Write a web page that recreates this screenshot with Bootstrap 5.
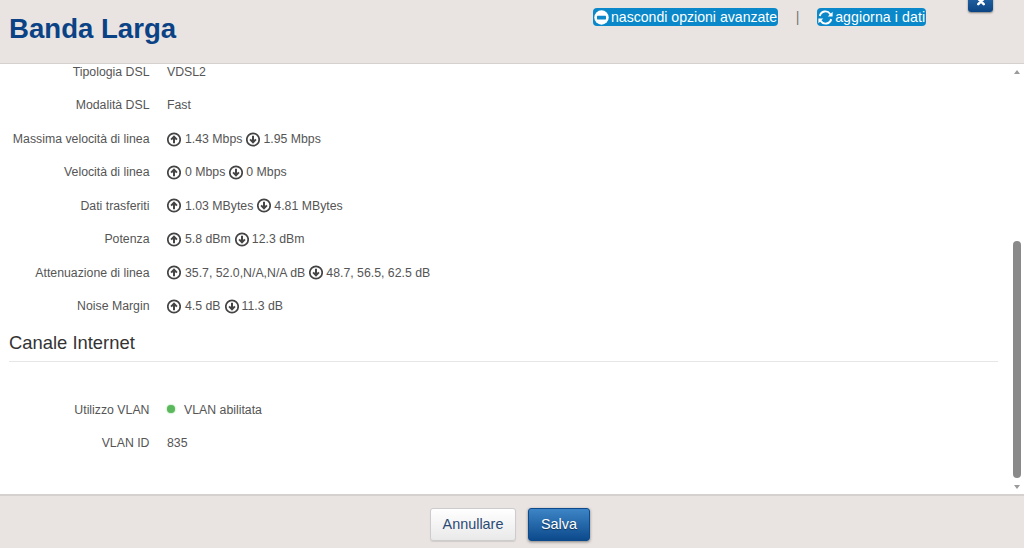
<!DOCTYPE html>
<html lang="it">
<head>
<meta charset="utf-8">
<title>Banda Larga</title>
<link href="https://cdn.jsdelivr.net/npm/bootstrap@5.3.0/dist/css/bootstrap.min.css" rel="stylesheet">
<style>
html,body{height:548px;overflow:hidden}
body{font-family:"Liberation Sans",Arial,sans-serif;font-size:12.3px;color:#555;background:#fff}
.shell{height:548px}
.top-bar{height:64px;background:#e9e4e1;border-bottom:1px solid #d5d1ce;flex:none;position:relative}
.page-title{font-size:27.6px;font-weight:700;color:#0a4285;margin:13px 0 0 9px;line-height:31px}
.top-links{position:absolute;left:593px;top:8px;font-size:14.1px;line-height:18px}
.pill-link{background:#0a88c9;color:#fff;border-radius:4px;padding:0 1px;height:18px;text-decoration:none}
.pill-link svg{margin-right:2px}
.pill-wide{letter-spacing:.1px}
.pipe{color:#777;width:39px;text-align:center}
.close-tab{position:absolute;left:968px;top:-10px;width:25px;height:22px;background:linear-gradient(#2d72b4,#0c4483);border-radius:0 0 3px 3px;box-shadow:0 1px 2px rgba(0,0,0,.45)}
.close-glyph{margin-bottom:6px}
.scroll-zone{flex:1;min-height:0;position:relative;overflow:hidden}
.data-pane{padding:0 26px 0 9px}
.data-row{height:33.45px;align-items:center}
.data-label{width:140.5px;text-align:right;flex:none;color:#555}
.data-value{margin-left:17.5px;white-space:nowrap;display:flex;align-items:center;color:#555}
.data-value svg{flex:none;margin-right:4px}
.data-value .dn{margin-left:4px;margin-right:3px}
.first-row{margin-top:-8.6px}
.section-head{font-size:18.4px;line-height:22px;color:#333;font-weight:400;margin:9.2px 0 0;padding-bottom:7px;border-bottom:1px solid #e6e6e6}
.gap-block{height:31.4px}
.vlan-dot{width:8px;height:8px;border-radius:50%;background:#5cb85c;box-shadow:0 0 2px #7fcf7f;margin-right:9px;flex:none;margin-bottom:2px}
.track{position:absolute;right:0;top:0;bottom:0;width:17px;background:#fff}
.thumb{position:absolute;left:6px;right:3px;top:177px;height:237px;background:#8a8a8a;border-radius:5px}
.arrow-up,.arrow-dn{position:absolute;left:7px;width:0;height:0;border-left:3px solid transparent;border-right:3px solid transparent}
.arrow-up{top:6px;border-bottom:4px solid #9a9a9a}
.arrow-dn{bottom:5px;border-top:4px solid #9a9a9a}
.foot-bar{height:54px;background:#e9e4e1;border-top:2px solid #d5d1ce;flex:none;padding-top:12px;padding-right:4px}
.act-btn{height:33px;border-radius:3px;font-size:14.4px;line-height:31px;padding:0;text-align:center}
.btn-cancel{width:86px;background:linear-gradient(#fff,#e9e9e9);border:1px solid #ccc;color:#2a4a75;box-shadow:0 1px 1px rgba(0,0,0,.1)}
.btn-save{width:62px;margin-left:12px;background:linear-gradient(#3d85c6,#0c4a8c);border:1px solid #0c4a8c;color:#fff;text-shadow:0 1px 1px rgba(0,0,0,.5);box-shadow:0 1px 3px rgba(0,0,0,.45)}
</style>
</head>
<body>
<div class="shell d-flex flex-column">
  <header class="top-bar">
    <h1 class="page-title">Banda Larga</h1>
    <div class="top-links d-flex align-items-center">
      <a class="pill-link d-flex align-items-center" href="#"><svg width="15" height="15" viewBox="0 0 16 16"><circle cx="8" cy="8" r="7.7" fill="#fff"/><rect x="3.2" y="6" width="9.6" height="4" rx=".6" fill="#0a88c9"/></svg>nascondi opzioni avanzate</a>
      <span class="pipe">|</span>
      <a class="pill-link pill-wide d-flex align-items-center" href="#"><svg width="15" height="15" viewBox="0 0 16 16"><path d="M15 7h-4.6l1.9-1.9A5 5 0 0 0 3 6.6L.9 6A7.2 7.2 0 0 1 13.8 3.6L15.6 1.8V7zM1 9h4.6l-1.9 1.9A5 5 0 0 0 13 9.4l2.1.6A7.2 7.2 0 0 1 2.2 12.4L.4 14.2V9z" fill="#fff"/></svg>aggiorna i dati</a>
    </div>
    <div class="close-tab d-flex align-items-end justify-content-center"><svg class="close-glyph" width="10" height="9" viewBox="0 0 10 10"><path d="M2 2l6 6M8 2l-6 6" stroke="#fff" stroke-width="2.8" stroke-linecap="round"/></svg></div>
  </header>
  <main class="scroll-zone">
    <svg width="0" height="0" class="position-absolute"><defs>
      <g id="up-ic"><circle cx="7" cy="7.5" r="6.2" fill="none" stroke="#444" stroke-width="1.7"/><path d="M7 11.2V4.8M4.1 7.6l2.9-3 2.9 3" fill="none" stroke="#444" stroke-width="2"/></g>
      <g id="dn-ic"><circle cx="7" cy="7.5" r="6.2" fill="none" stroke="#444" stroke-width="1.7"/><path d="M7 3.8v6.4M4.1 7.4l2.9 3 2.9-3" fill="none" stroke="#444" stroke-width="2"/></g>
    </defs></svg>
    <div class="data-pane">
      <div class="d-flex data-row first-row"><div class="data-label">Tipologia DSL</div><div class="data-value">VDSL2</div></div>
      <div class="d-flex data-row"><div class="data-label">Modalità DSL</div><div class="data-value">Fast</div></div>
      <div class="d-flex data-row"><div class="data-label">Massima velocità di linea</div><div class="data-value"><svg width="14" height="15"><use href="#up-ic"/></svg>1.43 Mbps<svg class="dn" width="14" height="15"><use href="#dn-ic"/></svg>1.95 Mbps</div></div>
      <div class="d-flex data-row"><div class="data-label">Velocità di linea</div><div class="data-value"><svg width="14" height="15"><use href="#up-ic"/></svg>0 Mbps<svg class="dn" width="14" height="15"><use href="#dn-ic"/></svg>0 Mbps</div></div>
      <div class="d-flex data-row"><div class="data-label">Dati trasferiti</div><div class="data-value"><svg width="14" height="15"><use href="#up-ic"/></svg>1.03 MBytes<svg class="dn" width="14" height="15"><use href="#dn-ic"/></svg>4.81 MBytes</div></div>
      <div class="d-flex data-row"><div class="data-label">Potenza</div><div class="data-value"><svg width="14" height="15"><use href="#up-ic"/></svg>5.8 dBm<svg class="dn" width="14" height="15"><use href="#dn-ic"/></svg>12.3 dBm</div></div>
      <div class="d-flex data-row"><div class="data-label">Attenuazione di linea</div><div class="data-value"><svg width="14" height="15"><use href="#up-ic"/></svg>35.7, 52.0,N/A,N/A dB<svg class="dn" width="14" height="15"><use href="#dn-ic"/></svg>48.7, 56.5, 62.5 dB</div></div>
      <div class="d-flex data-row"><div class="data-label">Noise Margin</div><div class="data-value"><svg width="14" height="15"><use href="#up-ic"/></svg>4.5 dB<svg class="dn" width="14" height="15"><use href="#dn-ic"/></svg>11.3 dB</div></div>
      <h2 class="section-head">Canale Internet</h2>
      <div class="gap-block"></div>
      <div class="d-flex data-row"><div class="data-label">Utilizzo VLAN</div><div class="data-value"><span class="vlan-dot"></span>VLAN abilitata</div></div>
      <div class="d-flex data-row"><div class="data-label">VLAN ID</div><div class="data-value">835</div></div>
    </div>
    <div class="track"><span class="arrow-up"></span><div class="thumb"></div><span class="arrow-dn"></span></div>
  </main>
  <footer class="foot-bar d-flex justify-content-center align-items-start">
    <button type="button" class="btn act-btn btn-cancel">Annullare</button>
    <button type="button" class="btn act-btn btn-save">Salva</button>
  </footer>
</div>
</body>
</html>
